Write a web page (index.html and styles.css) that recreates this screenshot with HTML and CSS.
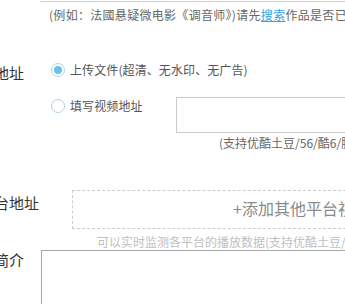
FILE: index.html
```html
<!DOCTYPE html>
<html lang="zh-CN">
<head>
<meta charset="utf-8">
<title>上传作品</title>
<link rel="stylesheet" href="styles.css">
</head>
<body>
<div class="form">
  <div class="row head">
    <div class="label"></div>
    <div class="field">
      <div class="top-line"></div>
      <div class="hint">(例如：法國悬疑微电影《调音师》)请先<a class="link" href="#">搜索</a>作品是否已存在，避免重复上传</div>
    </div>
  </div>

  <div class="row video">
    <div class="label video-label">视频地址</div>
    <div class="field">
      <div class="option first">
        <span class="radio checked"><span class="dot"></span></span>
        <span class="opt-text">上传文件(超清、无水印、无广告)</span>
      </div>
      <div class="option second">
        <div class="opt-left">
          <span class="radio"></span>
          <span class="opt-text">填写视频地址</span>
        </div>
        <div class="url-box"></div>
      </div>
      <div class="support">(支持优酷土豆/56/酷6/腾讯/爱奇艺等视频网站地址)</div>
    </div>
  </div>

  <div class="row platform">
    <div class="label platform-label">多平台地址</div>
    <div class="field">
      <div class="add-box">+添加其他平台视频地址</div>
      <div class="note">可以实时监测各平台的播放数据(支持优酷土豆/56/酷6/腾讯)</div>
    </div>
  </div>

  <div class="row intro">
    <div class="label intro-label">作品简介</div>
    <div class="field">
      <div class="intro-box"></div>
    </div>
  </div>
</div>
</body>
</html>
```

FILE: styles.css
```css
html, body {
  margin: 0;
  padding: 0;
  overflow: hidden;
  background: #ffffff;
}

body {
  font-family: "Noto Sans CJK SC", "Noto Sans", "Liberation Sans", sans-serif;
  color: #333333;
  width: 345px;
  height: 304px;
}

.form {
  margin-left: -36px;
  width: 800px;
}

.row {
  display: flex;
  align-items: flex-start;
}

.label {
  width: 76px;
  flex: none;
  font-size: 15px;
  color: #333333;
  white-space: nowrap;
}

.field {
  flex: 1;
  min-width: 0;
}

.top-line {
  margin-top: 1px;
  height: 1px;
  background: #d4d4d4;
}

.hint {
  margin-top: 4px;
  padding-left: 9px;
  font-size: 12px;
  line-height: 18px;
  color: #666666;
  letter-spacing: 0.3px;
  white-space: nowrap;
}

.link {
  color: #2fa4e7;
  text-decoration: underline;
}

/* video address */
.video {
  margin-top: 34px;
}

.video-label {
  line-height: 24px;
  padding-top: 3px;
}

.option {
  display: flex;
  align-items: center;
  font-size: 12px;
  color: #555555;
  white-space: nowrap;
}

.option.first {
  height: 24px;
  padding-left: 11px;
}

.option.second {
  margin-top: 15px;
  align-items: flex-start;
}

.opt-left {
  display: flex;
  align-items: center;
  height: 18px;
  padding-left: 11px;
  width: 125px;
  flex: none;
}

.radio {
  box-sizing: border-box;
  width: 14px;
  height: 14px;
  border: 1px solid #a9d5ec;
  border-radius: 50%;
  background: #ffffff;
  display: flex;
  align-items: center;
  justify-content: center;
  flex: none;
}

.radio .dot {
  width: 8px;
  height: 8px;
  border-radius: 50%;
  background: #66c2ea;
}

.opt-text {
  margin-left: 5px;
  font-size: 12px;
  line-height: 18px;
  letter-spacing: 0.1px;
}

.url-box {
  box-sizing: border-box;
  width: 320px;
  height: 36px;
  border: 1px solid #cccccc;
  background: #ffffff;
  flex: none;
}

.support {
  margin-top: 2px;
  padding-left: 179px;
  font-size: 12px;
  line-height: 16px;
  color: #666666;
  white-space: nowrap;
}

/* platform */
.platform {
  margin-top: 39px;
}

.platform-label {
  line-height: 26px;
}

.add-box {
  box-sizing: border-box;
  margin-left: 32px;
  width: 480px;
  height: 39px;
  border: 1px dashed #cccccc;
  padding-left: 160px;
  font-size: 16px;
  line-height: 35px;
  color: #8a8a8a;
  white-space: nowrap;
}

.note {
  margin-top: 5px;
  padding-left: 57px;
  font-size: 12px;
  line-height: 16px;
  color: #c0c0c0;
  white-space: nowrap;
}

/* intro */
.intro {
  margin-top: 0;
}

.intro-label {
  line-height: 20px;
}

.intro-box {
  box-sizing: border-box;
  margin-left: 1px;
  width: 480px;
  height: 120px;
  border: 1px solid #a9a9a9;
  background: #ffffff;
}
```
